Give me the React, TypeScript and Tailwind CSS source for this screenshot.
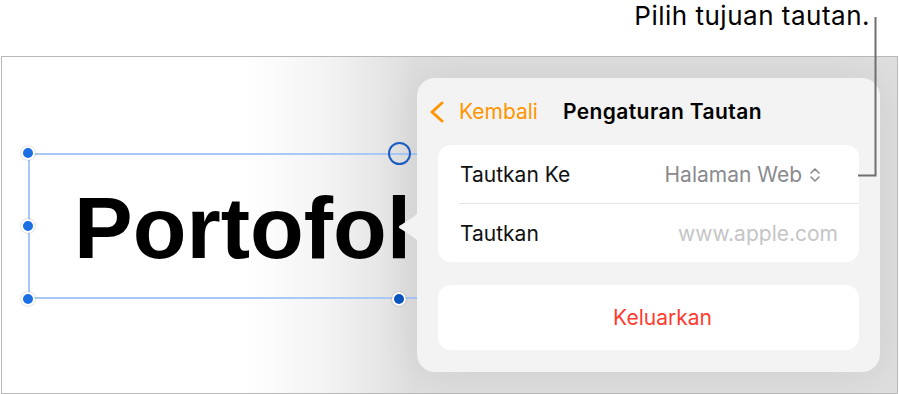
import React from "react";

const sf = { fontFamily: "Inter, 'Noto Sans', sans-serif" };

function Handle({ x, y, dark }: { x: number; y: number; dark?: boolean }) {
  return (
    <div
      className={`absolute w-[14px] h-[14px] rounded-full border-2 border-white shadow-[0_0_2px_rgba(0,0,0,0.3)] ${dark ? "bg-[#0b55c0]" : "bg-[#1a6fe3]"}`}
      style={{ left: x - 7, top: y - 7 }}
    />
  );
}

export default function App() {
  return (
    <div className="relative w-[899px] h-[394px] bg-white overflow-hidden" style={sf}>
      {/* callout text */}
      <div className="h-[56px] flex justify-end pr-[29px] pt-[1px]">
        <span className="text-[26px] leading-[30px] text-black tracking-[0.5px]">Pilih tujuan tautan.</span>
      </div>

      {/* canvas */}
      <div className="relative ml-[1px] w-[897px] h-[338px] border border-[#b8b8b8] bg-[linear-gradient(to_right,#ffffff_27%,#f4f4f4_36%,#dedede_46%)] overflow-hidden">
        {/* text on canvas, clipped by the popover */}
        <div className="absolute left-[72px] top-[127px] w-[343px] h-[100px] overflow-hidden">
          <div
            className="text-[88px] leading-[88px] font-bold text-black whitespace-nowrap"
            style={{ fontFamily: "'Liberation Sans', Arial, sans-serif" }}
          >
            Portofolio
          </div>
        </div>

        {/* selection box */}
        <div className="absolute left-[26px] top-[96px] w-[440px] h-[146px] border-l-2 border-t-2 border-b-2 border-[#a9c8f8]" />
        <Handle x={26} y={96} />
        <Handle x={26} y={169} />
        <Handle x={26} y={242} />
        <Handle x={397} y={242} dark />
        <div className="absolute left-[386px] top-[85px] w-[23px] h-[23px] rounded-full border-2 border-[#1c5fc4]" />

        {/* popover */}
        <div className="absolute left-[415px] top-[21px] w-[463px] h-[294px] rounded-[18px] bg-[#f3f3f3] flex flex-col shadow-[0_0_40px_rgba(0,0,0,0.08)]">
          <svg className="absolute left-[-19px] top-[135px]" width="20" height="28" viewBox="0 0 20 28">
            <path d="M20 0 C13 6 6 10 1.5 12.8 Q0 14 1.5 15.2 C6 18 13 22 20 28 Z" fill="#f3f3f3" />
          </svg>
          <div className="h-[67px] flex items-center pl-[12px]">
            <svg width="16" height="22" viewBox="0 0 16 22" className="mr-[14px]">
              <path d="M13 2 L3 11 L13 20" fill="none" stroke="#ff9500" strokeWidth="3" strokeLinecap="round" strokeLinejoin="round" />
            </svg>
            <span className="text-[21px] text-[#ff9500]">Kembali</span>
            <span className="ml-[25px] text-[21px] font-semibold text-black tracking-[0.4px]">Pengaturan Tautan</span>
          </div>
          <div className="mx-[21px] bg-white rounded-[13px] flex flex-col">
            <div className="h-[58px] flex items-center justify-between pl-[22px] pr-[38px] pt-[2px]">
              <span className="text-[21px] text-[#111]">Tautkan Ke</span>
              <span className="flex items-center text-[21px] text-[#8a8a8e]">
                Halaman Web
                <svg width="12" height="18" viewBox="0 0 12 18" className="ml-[7px]">
                  <path d="M2 7 L6 3 L10 7 M2 11 L6 15 L10 11" fill="none" stroke="#8a8a8e" strokeWidth="1.6" strokeLinecap="round" strokeLinejoin="round" />
                </svg>
              </span>
            </div>
            <div className="ml-[21px] h-px bg-[#e6e6e6]" />
            <div className="h-[58px] flex items-center justify-between pl-[22px] pr-[21px] pt-[2px]">
              <span className="text-[21px] text-[#111]">Tautkan</span>
              <span className="text-[21px] text-[#c5c5c7]">www.apple.com</span>
            </div>
          </div>
          <div className="mx-[21px] mt-[23px] h-[65px] bg-white rounded-[13px] flex items-center justify-center pl-[28px]">
            <span className="text-[21px] text-[#ff3b30]">Keluarkan</span>
          </div>
        </div>
      </div>

      {/* callout line */}
      <svg className="absolute left-0 top-0 pointer-events-none" width="899" height="394">
        <path d="M875.5 17 V175.5 H858" fill="none" stroke="#6f6f6f" strokeWidth="2" />
      </svg>
    </div>
  );
}
